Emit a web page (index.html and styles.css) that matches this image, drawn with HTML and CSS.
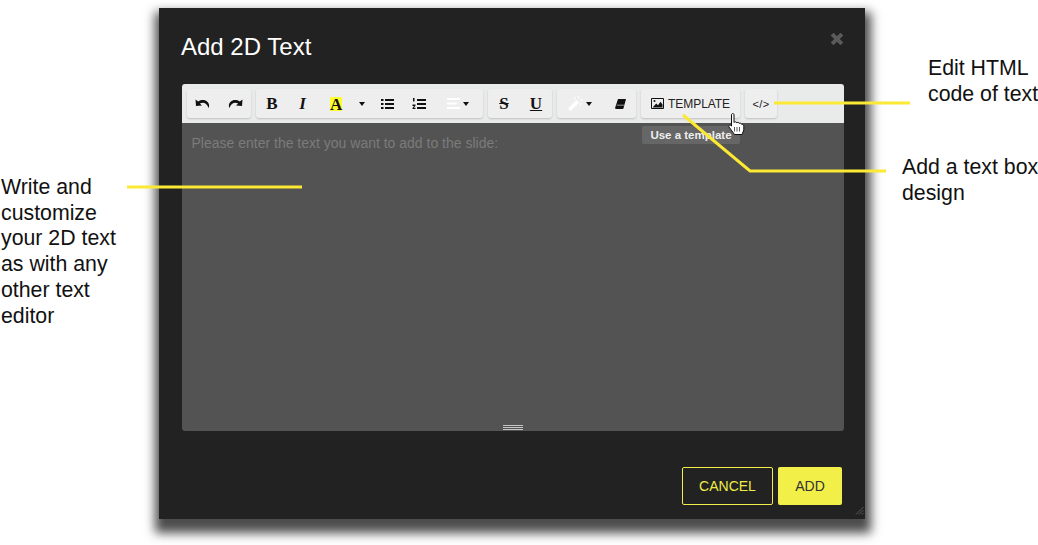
FILE: index.html
```html
<!DOCTYPE html>
<html lang="en">
<head>
<meta charset="utf-8">
<title>Add 2D Text</title>
<link rel="stylesheet" href="styles.css">
</head>
<body>
<main class="canvas">
  <section class="modal">
    <header class="modal-head">
      <h1 class="modal-title">Add 2D Text</h1>
      <svg class="close" viewBox="0 0 12 12"><path d="M1.800 1.800 10.200 10.200M10.200 1.800 1.800 10.200"/></svg>
    </header>
    <div class="editor">
      <div class="toolbar">
        <div class="group g-history">
          <span class="tool"><svg class="ic" width="16" height="10" viewBox="0 0 16 10"><path d="M0.500 0.500 1 7 7 6.500 4.800 4.600C8 3 11.500 3.600 13.600 9 16 3.600 9.500-1.600 3.200 2.600Z"/></svg></span>
          <span class="tool"><svg class="ic" width="16" height="10" viewBox="0 0 16 10"><path d="M15.500 0.500 15 7 9 6.500 11.200 4.600C8 3 4.500 3.600 2.400 9 0 3.600 6.500-1.600 12.800 2.600Z"/></svg></span>
        </div>
        <div class="group g-format">
          <span class="tool glyph bold">B</span>
          <span class="tool glyph italic"><span class="italic-mark">I</span></span>
          <span class="tool"><span class="hilite">A</span></span>
          <span class="tool narrow"><i class="caret"></i></span>
          <span class="tool"><svg class="ic" width="13" height="10" viewBox="0 0 13 10"><path d="M0 0h2.500v2H0zM4 0h9v2H4zM0 4h2.500v2H0zM4 4h9v2H4zM0 8h2.500v2H0zM4 8h9v2H4z"/></svg></span>
          <span class="tool"><svg class="ic" width="14" height="11" viewBox="0 0 14 11"><path d="M5 1h9v2H5zM5 5h9v2H5zM5 9h9v2H5zM1 0h1.500v3.500H1zM0.500 6.500h3v1.200L1.800 9.800h1.700V11H0.500V10L2 8H0.500z"/></svg></span>
          <span class="tool wide"><svg class="ic white" width="13" height="11" viewBox="0 0 13 11"><path d="M0 0h13v2H0zM0 4.500h10v2H0zM0 9h13v2H0z"/></svg><i class="caret"></i></span>
        </div>
        <div class="group g-style">
          <span class="tool glyph strike">S</span>
          <span class="tool glyph under">U</span>
        </div>
        <div class="group g-magic">
          <span class="tool wide"><svg class="ic white" width="15" height="15" viewBox="0 0 15 15"><path d="M0 12.500 8.500 4 11 6.500 2.500 15ZM10 0h1.200v2.500H10zM12.500 3.500H15v1.200h-2.500zM6 1h1.200v2.500H6zM12 7h1.200v2.500H12z"/></svg><i class="caret"></i></span>
          <span class="tool erase"><svg class="ic" width="11" height="10" viewBox="0 0 11 10"><path d="M3 0H11L8.500 9.200Q8.300 10 7.500 10H1.200Q-0.200 10 0.200 8.500Z"/><path class="eraser-cut" d="M1.800 5.800h7.600v0.600H1.800z"/></svg></span>
        </div>
        <div class="group g-template">
          <svg class="picture" width="13" height="11" viewBox="0 0 13 11"><path class="pic-frame" d="M0.500 0.500h12v10h-12z"/><path d="M2 9 5.200 5.500 7 7.200 9.500 3.800 11.500 6.500V9.500H2Z"/><circle cx="3.500" cy="3" r="1"/></svg>
          <span class="template-label">TEMPLATE</span>
        </div>
        <div class="group g-code"><span class="code-label">&lt;/&gt;</span></div>
        <div class="tooltip">Use a template</div>
      </div>
      <div class="editable">
        <p class="placeholder">Please enter the text you want to add to the slide:</p>
        <div class="grip"></div>
      </div>
    </div>
    <footer class="modal-foot">
      <button class="btn btn-cancel" type="button">CANCEL</button>
      <button class="btn btn-add" type="button">ADD</button>
    </footer>
    <svg class="resize" width="9" height="9" viewBox="0 0 9 9"><path d="M8.500 1 1 8.500M8.500 4 4 8.500M8.500 7 7 8.500"/></svg>
  </section>

  <svg class="leaders" width="1038" height="545" viewBox="0 0 1038 545">
    <path d="M127 187H302"/>
    <path d="M774 103H910"/>
    <path d="M683 115 750 171H886"/>
  </svg>

  <svg class="pointer" width="17" height="23" viewBox="0 0 17 23"><path d="M3.500 2C3.500 0 6 0 6 2V9.500C6.500 8.500 8.500 8.500 8.800 10 9.200 9 11 9 11.300 10.500 11.800 9.800 13.500 10 13.800 11.500 14.500 11 15.800 11.500 15.800 13V17L14 21.500H6.500L1 14C0.200 12.500 2 11.200 3.500 13Z"/><path d="M6.500 14v4.500M9 14v4.500M11.500 14v4.500"/></svg>

  <p class="note note-write">Write and<br>customize<br>your 2D text<br>as with any<br>other text<br>editor</p>
  <p class="note note-html">Edit HTML<br>code of text</p>
  <p class="note note-box">Add a text box<br>design</p>
</main>
</body>
</html>
```
FILE: styles.css
```css
* { box-sizing: border-box; }
html, body { margin: 0; padding: 0; background: #fff; }
body { font-family: "Liberation Sans", Arial, sans-serif; overflow: hidden; }

.canvas { position: relative; width: 1038px; height: 545px; padding: 8px 0 0 159px; }

.modal {
  position: relative;
  width: 706px;
  height: 511px;
  background: #222;
  box-shadow: 1px 9px 10px 5px rgba(0, 0, 0, .7);
  padding: 0 21px 0 23px;
  display: flex;
  flex-direction: column;
}
.modal-head { height: 76px; display: flex; justify-content: space-between; padding-top: 24px; }
.modal-title { margin: 0 0 0 -1px; font-size: 24px; line-height: 30px; font-weight: 400; color: #fff; }
.close { width: 14px; height: 14px; flex: none; fill: none; stroke: #5a5a5a; stroke-width: 3.400; }

.editor { width: 662px; display: flex; flex-direction: column; }
.toolbar {
  position: relative;
  height: 39px;
  background: #e9ebea;
  border-radius: 3px 3px 0 0;
  display: flex;
  gap: 5px;
  padding: 5px 0 0 5px;
}
.group {
  height: 29px;
  background: #eee;
  border-radius: 3px;
  box-shadow: 0 1px 2px rgba(0, 0, 0, .18);
  display: flex;
  align-items: center;
  color: #111;
}
.g-history { width: 64px; }
.g-format { width: 227px; }
.g-style { width: 64px; }
.g-magic { width: 79px; }
.g-template { width: 99px; padding-left: 10px; gap: 4px; }
.g-code { width: 32px; justify-content: center; }

.tool { flex: none; width: 32px; display: flex; align-items: center; justify-content: center; gap: 3px; height: 100%; }
.narrow { width: 19px; }
.wide { width: 48px; padding-right: 2px; }
.erase { width: 31px; }
.ic { fill: #111; flex: none; }
.ic.white { fill: #fff; }
.eraser-cut { fill: #eee; }
.caret { width: 0; height: 0; border: 3px solid transparent; border-top: 4px solid #111; border-bottom: 0; flex: none; }

.glyph { font-family: "Liberation Serif", "Times New Roman", serif; font-size: 17px; font-weight: 700; color: #111; }
.italic { font-style: italic; }
.italic-mark { margin-right: 3px; }
.strike { text-decoration: line-through; }
.under { text-decoration: underline; }
.hilite {
  display: block;
  width: 12px;
  height: 14px;
  background: #ffff2e;
  font: 700 17px/15px "Liberation Serif", "Times New Roman", serif;
  text-align: center;
  color: #111;
}

.picture { fill: #111; flex: none; }
.pic-frame { fill: none; stroke: #111; }
.template-label { font-size: 12px; letter-spacing: -.05px; color: #222; white-space: nowrap; }
.code-label { font-size: 11px; color: #222; letter-spacing: .3px; }

.tooltip {
  position: absolute;
  left: 460px;
  top: 42px;
  width: 98px;
  height: 18px;
  line-height: 18px;
  border-radius: 2px;
  background: #666;
  color: #eee;
  font-size: 11.500px;
  font-weight: 700;
  text-align: center;
  white-space: nowrap;
  z-index: 1;
}

.editable {
  position: relative;
  height: 308px;
  background: #535353;
  border-radius: 0 0 3px 3px;
  padding: 12px 9.500px;
}
.placeholder { margin: 0; font-size: 14px; line-height: 16px; color: #7b7b7b; }
.grip {
  position: absolute;
  left: 321px;
  bottom: 1px;
  width: 20px;
  height: 5px;
  border-top: 1px solid #c4c4c4;
  border-bottom: 1px solid #c4c4c4;
  background: linear-gradient(#535353 0 1px, #c4c4c4 1px 2px, #535353 2px);
}

.modal-foot { display: flex; justify-content: flex-end; gap: 5px; padding: 36px 2px 0 0; }
.btn { height: 38px; font: 400 14px "Liberation Sans", Arial, sans-serif; border-radius: 2px; padding: 0; }
.btn-cancel { width: 91px; background: transparent; border: 1px solid #f1ef48; color: #eeec47; }
.btn-add { width: 64px; background: #f1ef48; border: 0; color: #333; }

.resize { position: absolute; right: 1px; bottom: 4px; fill: none; stroke: #666; stroke-width: .8; }

.leaders { position: absolute; left: 0; top: 0; z-index: 2; fill: none; stroke: #fbe934; stroke-width: 3; pointer-events: none; }

.pointer { position: absolute; left: 728px; top: 113px; z-index: 3; fill: #fff; stroke: #111; stroke-width: 1; }
.pointer path + path { stroke-width: .7; }

.note { position: absolute; margin: 0; color: #111; font-size: 21.300px; line-height: 25.700px; white-space: nowrap; }
.note-write { left: 1px; top: 175px; }
.note-html { left: 928px; top: 56px; }
.note-box { left: 902px; top: 155px; }
```
